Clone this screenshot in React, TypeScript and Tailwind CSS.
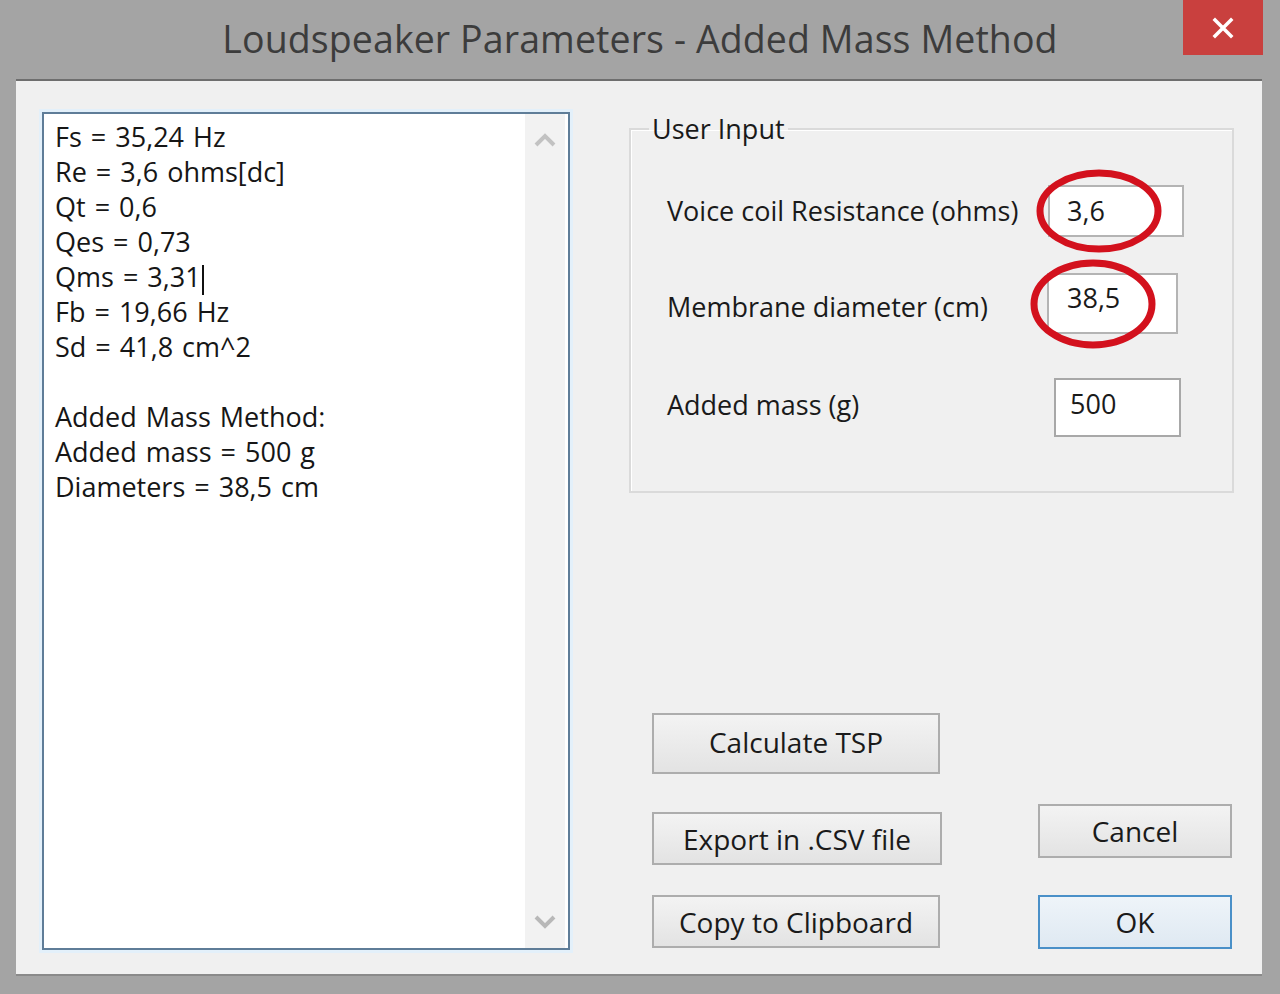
import React from 'react';

const font = { fontFamily: "'Open Sans', 'Noto Sans', sans-serif" };

const lines = [
  'Fs = 35,24 Hz',
  'Re = 3,6 ohms[dc]',
  'Qt = 0,6',
  'Qes = 0,73',
  'Qms = 3,31',
  'Fb = 19,66 Hz',
  'Sd = 41,8 cm^2',
  '',
  'Added Mass Method:',
  'Added mass = 500 g',
  'Diameters = 38,5 cm',
];

function Ring({ w, h, left, top }: { w: number; h: number; left: number; top: number }) {
  return (
    <svg
      className="absolute pointer-events-none"
      style={{ left, top, width: w, height: h }}
      viewBox={`0 0 ${w} ${h}`}
    >
      <ellipse cx={w / 2} cy={h / 2} rx={w / 2 - 4} ry={h / 2 - 4} fill="none" stroke="#d3111d" strokeWidth="7" />
    </svg>
  );
}

function WinButton({ label, className, primary }: { label: string; className: string; primary?: boolean }) {
  return (
    <button
      className={`flex items-center justify-center text-[28px] text-[#1a1a1a] bg-gradient-to-b ${
        primary
          ? 'border-2 border-[#4a90c8] from-[#eef4f9] to-[#dfe9f2]'
          : 'border-2 border-[#adadad] from-[#f3f3f3] to-[#e3e3e3]'
      } ${className}`}
    >
      {label}
    </button>
  );
}

export default function App() {
  return (
    <div className="w-[1280px] h-[994px] bg-[#a4a4a4] flex flex-col overflow-hidden" style={font}>
      {/* title bar */}
      <div className="relative h-[79px] shrink-0 flex items-center justify-center">
        <span className="text-[37.5px] text-[#3c3c3c] tracking-[0.1px]">
          Loudspeaker Parameters - Added Mass Method
        </span>
        <div className="absolute top-0 right-[17px] w-[80px] h-[55px] bg-[#c9403e] flex items-center justify-center">
          <svg width="22" height="22" viewBox="0 0 22 22">
            <path d="M3 3 L19 19 M19 3 L3 19" stroke="#fff" strokeWidth="3.5" strokeLinecap="square" />
          </svg>
        </div>
      </div>

      {/* client area */}
      <div className="ml-[16px] mr-[18px] h-[895px] bg-[#f0f0f0] border-t-2 border-[#6e6e6e] flex pl-[26px] pt-[31px] shadow-[0_2px_0_#8a8a8a]">
        {/* results textbox */}
        <div className="w-[528px] h-[838px] border-2 border-[#5f7d98] shadow-[0_0_0_3px_#e3f0fa] bg-white flex">
          <div className="flex-1 pl-[11px] pt-[5px] text-[27px] leading-[35px] text-[#161616] [word-spacing:2px]">
            {lines.map((l, i) => (
              <div key={i} className="h-[35px] whitespace-pre">
                {l}
                {i === 4 && <span className="inline-block w-[2px] h-[30px] bg-[#111] align-middle ml-[1px]" />}
              </div>
            ))}
          </div>
          <div className="w-[40px] mr-[3px] bg-[#f2f2f2] flex flex-col items-center justify-between py-[18px]">
            <svg width="22" height="16" viewBox="0 0 22 16">
              <path d="M2 13 L11 4 L20 13" fill="none" stroke="#c2c2c2" strokeWidth="4" />
            </svg>
            <svg width="22" height="16" viewBox="0 0 22 16">
              <path d="M2 3 L11 12 L20 3" fill="none" stroke="#b8b8b8" strokeWidth="4" />
            </svg>
          </div>
        </div>

        {/* right side */}
        <div className="ml-[59px] flex flex-col">
          <fieldset className="w-[605px] h-[380px] border-2 border-[#dadada] shadow-[inset_1px_1px_0_#fff] px-0 pb-0 mt-[1px]">
            <legend className="ml-[18px] px-[3px] text-[27px] leading-[32px] text-[#1a1a1a]">User Input</legend>
            <div className="pl-[36px] pr-[48px] pt-[40px] flex flex-col text-[27px] text-[#1a1a1a]">
              <div className="h-[52px] flex items-center justify-between">
                <span>Voice coil Resistance (ohms)</span>
                <div className="relative">
                  <div className="w-[136px] h-[52px] bg-white border-2 border-[#b4b4b4] pl-[17px] flex items-center">3,6</div>
                  <Ring w={126} h={84} left={-12} top={-16} />
                </div>
              </div>
              <div className="h-[61px] mt-[36px] flex items-center justify-between pr-[6px]">
                <span className="mt-[8px]">Membrane diameter (cm)</span>
                <div className="relative">
                  <div className="w-[131px] h-[61px] bg-white border-2 border-[#b4b4b4] pl-[18px] pb-[10px] flex items-center">38,5</div>
                  <Ring w={126} h={90} left={-17} top={-14} />
                </div>
              </div>
              <div className="h-[59px] mt-[44px] flex items-center justify-between pr-[3px]">
                <span className="-mt-[4px]">Added mass (g)</span>
                <div className="w-[127px] h-[59px] bg-white border-2 border-[#a8a8a8] pl-[14px] pb-[6px] flex items-center">500</div>
              </div>
            </div>
          </fieldset>

          <div className="flex pl-[23px] mt-[220px]">
            <div className="flex flex-col">
              <WinButton label="Calculate TSP" className="w-[288px] h-[61px] pb-[4px]" />
              <WinButton label="Export in .CSV file" className="w-[290px] h-[53px] mt-[38px]" />
              <WinButton label="Copy to Clipboard" className="w-[288px] h-[53px] mt-[30px]" />
            </div>
            <div className="flex flex-col ml-[96px] pt-[91px]">
              <WinButton label="Cancel" className="w-[194px] h-[54px]" />
              <WinButton label="OK" className="w-[194px] h-[54px] mt-[37px]" primary />
            </div>
          </div>
        </div>
      </div>
    </div>
  );
}
